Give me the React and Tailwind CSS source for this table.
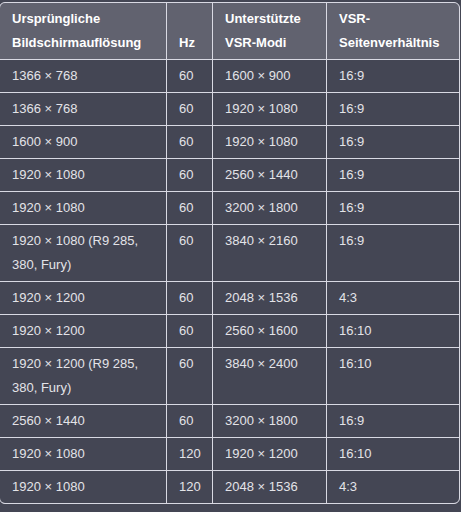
import React from 'react';

const rows = [
  ['1366 × 768', '60', '1600 × 900', '16:9'],
  ['1366 × 768', '60', '1920 × 1080', '16:9'],
  ['1600 × 900', '60', '1920 × 1080', '16:9'],
  ['1920 × 1080', '60', '2560 × 1440', '16:9'],
  ['1920 × 1080', '60', '3200 × 1800', '16:9'],
  ['1920 × 1080 (R9 285, 380, Fury)', '60', '3840 × 2160', '16:9'],
  ['1920 × 1200', '60', '2048 × 1536', '4:3'],
  ['1920 × 1200', '60', '2560 × 1600', '16:10'],
  ['1920 × 1200 (R9 285, 380, Fury)', '60', '3840 × 2400', '16:10'],
  ['2560 × 1440', '60', '3200 × 1800', '16:9'],
  ['1920 × 1080', '120', '1920 × 1200', '16:10'],
  ['1920 × 1080', '120', '2048 × 1536', '4:3'],
];

const headers = ['Ursprüngliche Bildschirmauflösung', 'Hz', 'Unterstützte VSR-Modi', 'VSR-Seitenverhältnis'];

export default function App() {
  return (
    <div className="min-h-screen bg-[#444654] pt-0.5" style={{ fontFamily: '"Liberation Sans", Arial, sans-serif' }}>
      <div className="-ml-px w-[461px] overflow-hidden rounded-md border border-[#d9d9e3] bg-[#d9d9e3]">
        <div className="grid grid-cols-[166px_45px_113px_132px] gap-px text-[13px] leading-6">
          {headers.map((h) => (
            <div key={h} className="flex items-end bg-[#61626f] px-3 py-1 font-bold text-white">
              {h}
            </div>
          ))}
          {rows.map((r, i) =>
            r.map((c, j) => (
              <div key={`${i}-${j}`} className="bg-[#444654] px-3 py-1 text-[#e3e3e8]">
                {c}
              </div>
            ))
          )}
        </div>
      </div>
    </div>
  );
}
